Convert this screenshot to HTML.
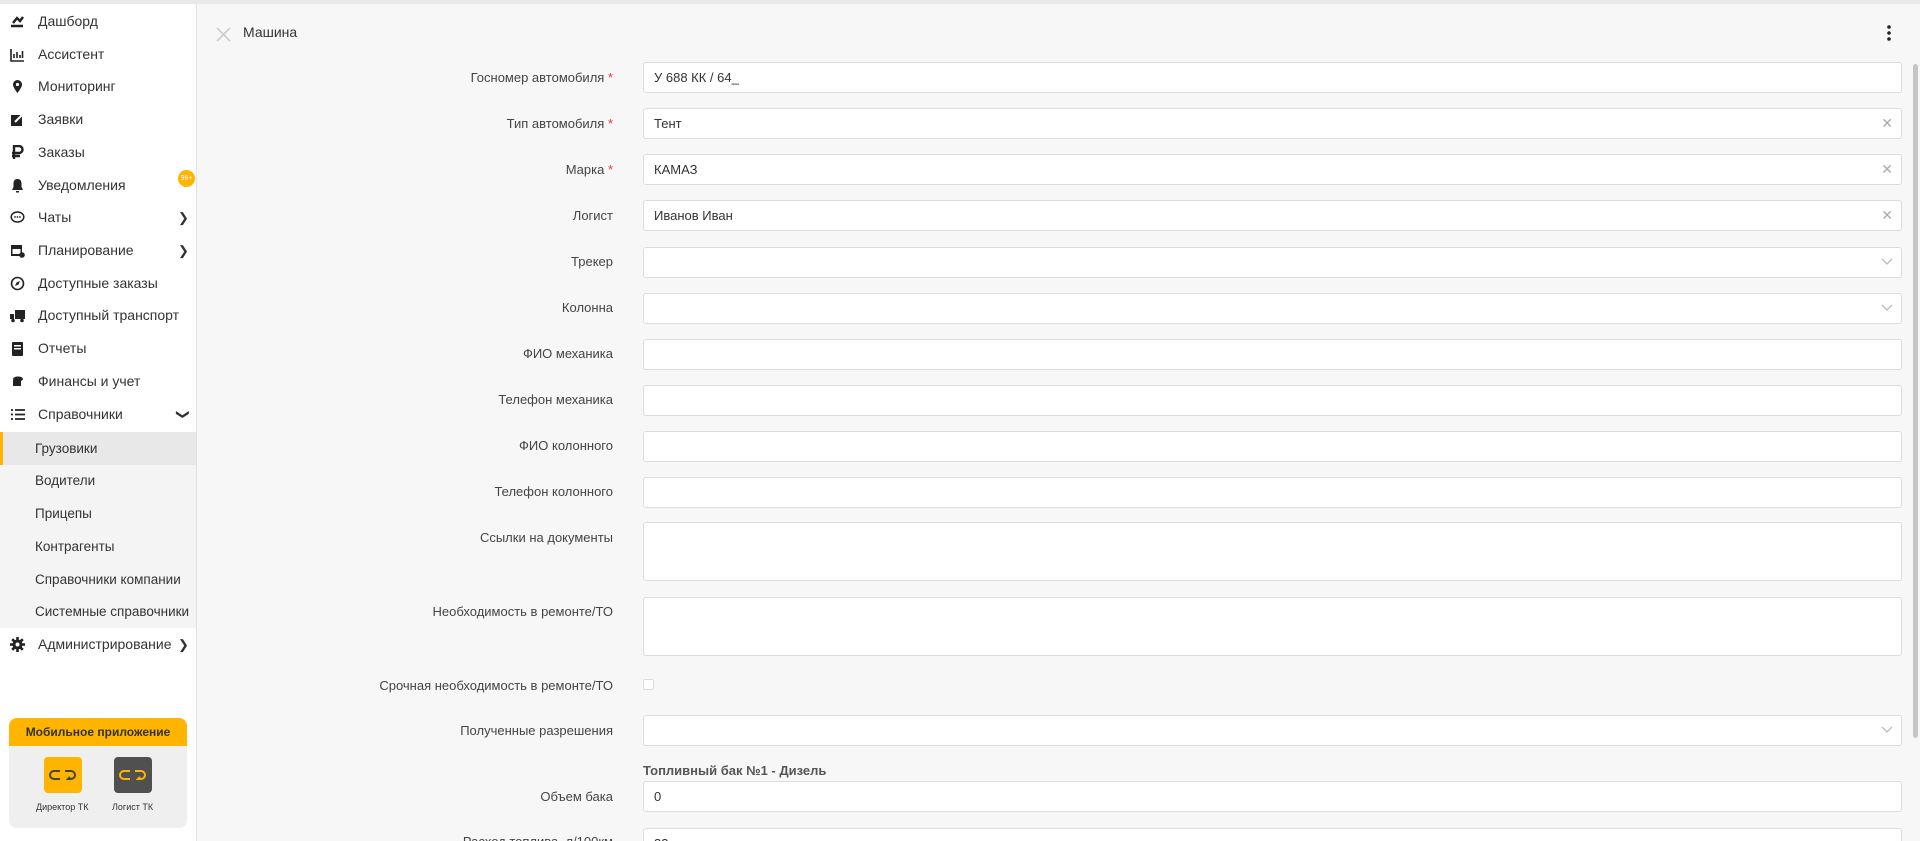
<!DOCTYPE html>
<html><head><meta charset="utf-8">
<style>
*{box-sizing:border-box;margin:0;padding:0}
html,body{width:1920px;height:841px;overflow:hidden;background:#f7f7f7;font-family:"Liberation Sans","Noto Sans CJK SC",sans-serif;color:#333}
#wrap{position:relative;width:1920px;height:841px;overflow:hidden}
.topbar{position:absolute;left:0;top:0;width:1920px;height:4px;background:#e9e9e9}
.side{position:absolute;left:0;top:4px;width:197px;height:837px;background:#fff;border-right:1px solid #e2e2e2}
.mi{position:absolute;left:0;width:196px;height:33px;font-size:14px;color:#333;line-height:33px}
.mi .t{position:absolute;left:38px}
.mi .ic{position:absolute;left:10px;top:9px;width:15px;height:15px}
.mi .ch{position:absolute;left:178px;top:0;font-size:13px}
.sub{position:absolute;left:0;top:428px;width:196px;height:196px;background:#f4f4f4}
.si{position:absolute;left:0;width:196px;height:33px;line-height:33px;font-size:13.5px;color:#333}
.si .t{position:absolute;left:35px}
.act{background:#e8e8e8}
.act:before{content:"";position:absolute;left:0;top:0;width:3px;height:33px;background:#ffb400}
.badge{position:absolute;left:178px;top:170px;width:17px;height:17px;border-radius:50%;background:#ffb400;color:#fff;font-size:7px;line-height:17px;text-align:center}
.mob{position:absolute;left:9px;top:718px;width:178px;height:110px;border-radius:8px;background:#efefef;overflow:hidden}
.mob .h{height:28px;background:#ffb400;text-align:center;font-size:12px;font-weight:bold;line-height:28px;color:#333}
.app{position:absolute;top:39px;width:38px;height:36px;border-radius:4px}
.lab{position:absolute;top:84px;font-size:9px;color:#333}
.hdr-x{position:absolute;left:216px;top:27px}
.ttl{position:absolute;left:243px;top:24px;font-size:14px;color:#333}
.lbl{position:absolute;right:1307px;font-size:13px;color:#444;text-align:right;white-space:nowrap}
.lbl b{color:#e53935;font-weight:normal}
.inp{position:absolute;left:643px;width:1259px;height:31px;background:#fff;border:1px solid #ddd;border-radius:3px;font-size:13px;line-height:29px;padding-left:10px;color:#333}
.x{position:absolute;right:8px;top:0;color:#aaa;font-size:14px}
.dd{position:absolute;right:8px;top:9px}
.sb{position:absolute;left:1913px;top:64px;width:5px;height:674px;background:#c6c6c6;border-radius:3px}
</style></head><body><div id="wrap">
<div class="topbar"></div>
<div class="side">
 <div class="sub"></div>
</div>
<div style="position:absolute;left:0;top:0;width:197px;height:841px">
 <div class="mi" style="top:5px"><svg class="ic" viewBox="0 0 15 15"><path d="M1 12h12M3 9l4-5 3 3 3-4" stroke="#222" stroke-width="2.4" fill="none"/></svg><span class="t">Дашборд</span></div>
 <div class="mi" style="top:38px"><svg class="ic" viewBox="0 0 15 15"><path d="M1 2v12h13M4 11V7M7 11V5M10 11V8M12.5 11V4" stroke="#222" stroke-width="1.6" fill="none"/></svg><span class="t">Ассистент</span></div>
 <div class="mi" style="top:70px"><svg class="ic" viewBox="0 0 15 15"><path d="M7.5 1a4.5 4.5 0 0 0-4.5 4.5c0 3 4.5 8.5 4.5 8.5s4.5-5.5 4.5-8.5A4.5 4.5 0 0 0 7.5 1z" fill="#222"/><circle cx="7.5" cy="5.5" r="1.6" fill="#fff"/></svg><span class="t">Мониторинг</span></div>
 <div class="mi" style="top:103px"><svg class="ic" viewBox="0 0 15 15"><rect x="1" y="3" width="11" height="11" fill="#222"/><path d="M5 10l8-8" stroke="#fff" stroke-width="2"/></svg><span class="t">Заявки</span></div>
 <div class="mi" style="top:136px"><svg class="ic" viewBox="0 0 15 15"><path d="M4 14V1h5a3.5 3.5 0 0 1 0 7H2M2 11h8" stroke="#222" stroke-width="2.4" fill="none"/></svg><span class="t">Заказы</span></div>
 <div class="mi" style="top:169px"><svg class="ic" viewBox="0 0 15 15"><path d="M7.5 1c-3 0-4 2-4 5v3L2 12h11l-1.5-3V6c0-3-1-5-4-5zM6 13h3v1.5H6z" fill="#222"/></svg><span class="t">Уведомления</span></div>
 <div class="mi" style="top:201px"><svg class="ic" viewBox="0 0 15 15"><ellipse cx="7.5" cy="7" rx="6.3" ry="5" stroke="#222" stroke-width="1.5" fill="none"/><circle cx="5" cy="7" r=".9" fill="#222"/><circle cx="7.5" cy="7" r=".9" fill="#222"/><circle cx="10" cy="7" r=".9" fill="#222"/></svg><span class="t">Чаты</span><span class="ch">&#x276F;</span></div>
 <div class="mi" style="top:234px"><svg class="ic" viewBox="0 0 15 15"><rect x="1" y="2" width="11" height="11" fill="#222"/><rect x="2.5" y="6" width="8" height="5" fill="#fff"/><circle cx="12" cy="12" r="2.8" fill="#222"/></svg><span class="t">Планирование</span><span class="ch">&#x276F;</span></div>
 <div class="mi" style="top:267px"><svg class="ic" viewBox="0 0 15 15"><circle cx="7.5" cy="7.5" r="6" stroke="#222" stroke-width="1.6" fill="none"/><path d="M10 5L8.5 8.5 5 10l1.5-3.5z" fill="#222"/></svg><span class="t">Доступные заказы</span></div>
 <div class="mi" style="top:299px"><svg class="ic" viewBox="0 0 15 15"><rect x="5" y="2" width="10" height="9" fill="#222"/><path d="M0 6h4v5H0z" fill="#222"/><circle cx="3" cy="12.5" r="1.8" fill="#222"/><circle cx="12" cy="12.5" r="1.8" fill="#222"/></svg><span class="t">Доступный транспорт</span></div>
 <div class="mi" style="top:332px"><svg class="ic" viewBox="0 0 15 15"><rect x="2" y="1" width="11" height="14" rx="1" fill="#222"/><rect x="4" y="4" width="7" height="1.5" fill="#fff"/><rect x="4" y="7" width="7" height="1.5" fill="#fff"/></svg><span class="t">Отчеты</span></div>
 <div class="mi" style="top:365px"><svg class="ic" viewBox="0 0 15 15"><ellipse cx="8" cy="5" rx="5" ry="2.5" fill="#222"/><rect x="3" y="6" width="8" height="6" fill="#222"/></svg><span class="t">Финансы и учет</span></div>
 <div class="mi" style="top:398px"><svg class="ic" viewBox="0 0 15 15"><path d="M1 3h2M5 3h10M1 7.5h2M5 7.5h10M1 12h2M5 12h10" stroke="#222" stroke-width="1.8"/></svg><span class="t">Справочники</span><span class="ch" style="transform:rotate(90deg);display:inline-block">&#x276F;</span></div>
 <div class="si act" style="top:432px"><span class="t">Грузовики</span></div>
 <div class="si" style="top:464px"><span class="t">Водители</span></div>
 <div class="si" style="top:497px"><span class="t">Прицепы</span></div>
 <div class="si" style="top:530px"><span class="t">Контрагенты</span></div>
 <div class="si" style="top:563px"><span class="t">Справочники компании</span></div>
 <div class="si" style="top:595px"><span class="t">Системные справочники</span></div>
 <div class="mi" style="top:628px"><svg class="ic" viewBox="0 0 15 15"><circle cx="7.5" cy="7.5" r="5" fill="#222"/><path d="M7.5 0v15M0 7.5h15M2.2 2.2l10.6 10.6M12.8 2.2L2.2 12.8" stroke="#222" stroke-width="2.6"/><circle cx="7.5" cy="7.5" r="2" fill="#fff"/></svg><span class="t">Администрирование</span><span class="ch">&#x276F;</span></div>
 <div class="badge">99+</div>
 <div class="mob"><div class="h">Мобильное приложение</div>
  <div class="app" style="left:35px;background:#ffb400"><svg width="38" height="36" viewBox="0 0 38 36"><path d="M16 14h-6a4 4 0 0 0 0 8h6M21 14h6a4 4 0 0 1 0 8h-3l2-2" stroke="#444" stroke-width="2" fill="none"/></svg></div>
  <div class="app" style="left:105px;background:#505050"><svg width="38" height="36" viewBox="0 0 38 36"><path d="M16 14h-6a4 4 0 0 0 0 8h6M21 14h6a4 4 0 0 1 0 8h-3l2-2" stroke="#ffb400" stroke-width="2" fill="none"/></svg></div>
  <div class="lab" style="left:27px">Директор ТК</div>
  <div class="lab" style="left:103px">Логист ТК</div>
 </div>
</div>
<svg class="hdr-x" width="15" height="15" viewBox="0 0 15 15"><path d="M1 1l13 13M14 1L1 14" stroke="#ccc" stroke-width="1.6"/></svg>
<div class="ttl">Машина</div>
<svg style="position:absolute;left:1886px;top:24px" width="6" height="18"><circle cx="3" cy="3" r="1.8" fill="#222"/><circle cx="3" cy="9" r="1.8" fill="#222"/><circle cx="3" cy="15" r="1.8" fill="#222"/></svg>

<div class="lbl" style="top:70px">Госномер автомобиля <b>*</b></div><div class="inp" style="top:62px">У 688 КК / 64_</div>
<div class="lbl" style="top:116px">Тип автомобиля <b>*</b></div><div class="inp" style="top:108px">Тент<span class="x">✕</span></div>
<div class="lbl" style="top:162px">Марка <b>*</b></div><div class="inp" style="top:154px">КАМАЗ<span class="x">✕</span></div>
<div class="lbl" style="top:208px">Логист</div><div class="inp" style="top:200px">Иванов Иван<span class="x">✕</span></div>
<div class="lbl" style="top:254px">Трекер</div><div class="inp" style="top:247px"><svg class="dd" width="12" height="10"><path d="M1 2l5 5 5-5" stroke="#bbb" stroke-width="1.3" fill="none"/></svg></div>
<div class="lbl" style="top:300px">Колонна</div><div class="inp" style="top:293px"><svg class="dd" width="12" height="10"><path d="M1 2l5 5 5-5" stroke="#bbb" stroke-width="1.3" fill="none"/></svg></div>
<div class="lbl" style="top:346px">ФИО механика</div><div class="inp" style="top:339px"></div>
<div class="lbl" style="top:392px">Телефон механика</div><div class="inp" style="top:385px"></div>
<div class="lbl" style="top:438px">ФИО колонного</div><div class="inp" style="top:431px"></div>
<div class="lbl" style="top:484px">Телефон колонного</div><div class="inp" style="top:477px"></div>
<div class="lbl" style="top:530px">Ссылки на документы</div><div class="inp" style="top:522px;height:59px"></div>
<div class="lbl" style="top:604px">Необходимость в ремонте/ТО</div><div class="inp" style="top:597px;height:59px"></div>
<div class="lbl" style="top:678px">Срочная необходимость в ремонте/ТО</div><div style="position:absolute;left:643px;top:679px;width:11px;height:11px;border:1px solid #ddd;border-radius:2px;background:#fff"></div>
<div class="lbl" style="top:723px">Полученные разрешения</div><div class="inp" style="top:715px"><svg class="dd" width="12" height="10"><path d="M1 2l5 5 5-5" stroke="#bbb" stroke-width="1.3" fill="none"/></svg></div>
<div style="position:absolute;left:643px;top:763px;font-size:13px;font-weight:bold;color:#555">Топливный бак №1 - Дизель</div>
<div class="lbl" style="top:789px">Объем бака</div><div class="inp" style="top:781px">0</div>
<div class="lbl" style="top:834px">Расход топлива, л/100км</div><div class="inp" style="top:828px">33</div>
<div class="sb"></div>
</div></body></html>
